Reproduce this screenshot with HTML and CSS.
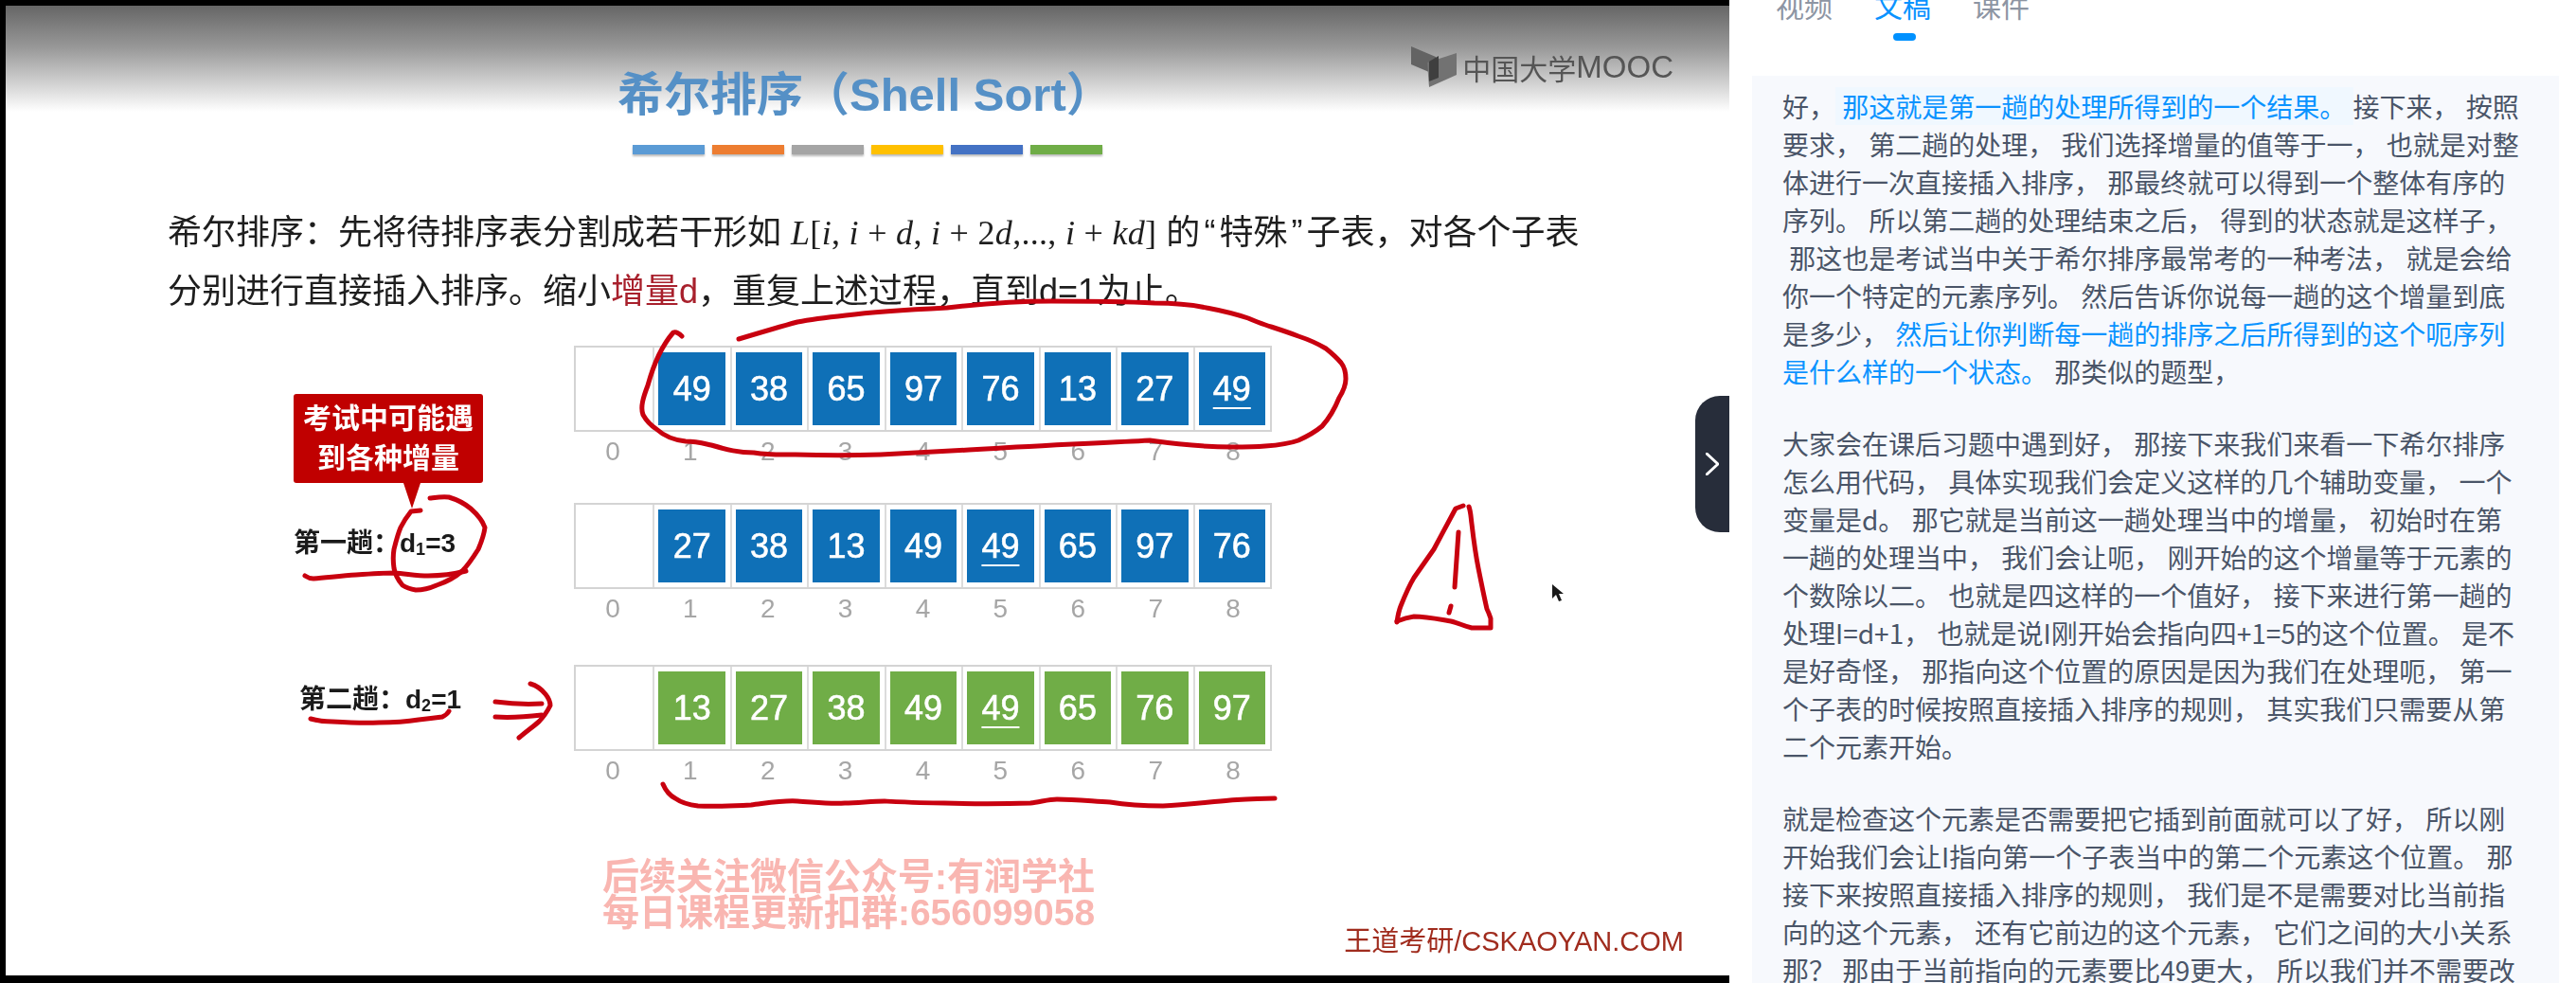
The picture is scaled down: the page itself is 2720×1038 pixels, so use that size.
FILE: index.html
```html
<!DOCTYPE html>
<html lang="zh-CN">

<head>
    <meta charset="UTF-8">
    <title>希尔排序 - 文稿</title>
    <link rel="stylesheet" href="styles.css">
</head>

<body>
    <div class="video">
        <div class="slide">
            <div class="slide-head">
                <h1 class="slide-title">希尔排序（Shell Sort）</h1>
                <div class="logo">
                    <svg class="logo-icon" width="48" height="44" viewBox="0 0 48 44">
                        <path d="M0 0 L26 11 L26 30 L0 19 Z" fill="#636363" />
                        <path d="M17 17 L48 7 L48 30 L19 43 Z" fill="#727272" />
                        <path d="M19 16 L29 10 L29 33 L19 37 Z" fill="#3f3f3f" />
                    </svg>
                    <span class="logo-cn">中国大学</span><span class="logo-en">MOOC</span>
                </div>
            </div>

            <div class="bars">
                <span class="bar bar-blue"></span>
                <span class="bar bar-orange"></span>
                <span class="bar bar-gray"></span>
                <span class="bar bar-yellow"></span>
                <span class="bar bar-navy"></span>
                <span class="bar bar-green"></span>
            </div>

            <p class="intro">
                希尔排序：先将待排序表分割成若干形如 <span class="formula"><i>L</i>[<i>i</i>, <i>i</i> + <i>d</i>, <i>i</i> + 2<i>d</i>,..., <i>i</i> + <i>kd</i>]</span> 的<span class="quote">“</span>特殊<span class="quote">”</span>子表，对各个子表<br>
                分别进行直接插入排序。缩小<span class="hot">增量d</span>，重复上述过程，直到d=1为止。
            </p>

            <div class="pass pass-first">
                <div class="pass-label"></div>
                <div class="array">
                    <div class="cells">
                        <div class="cell"></div>
                        <div class="cell"><b class="num">49</b></div>
                        <div class="cell"><b class="num">38</b></div>
                        <div class="cell"><b class="num">65</b></div>
                        <div class="cell"><b class="num">97</b></div>
                        <div class="cell"><b class="num">76</b></div>
                        <div class="cell"><b class="num">13</b></div>
                        <div class="cell"><b class="num">27</b></div>
                        <div class="cell"><b class="num"><u>49</u></b></div>
                    </div>
                    <div class="index">
                        <span>0</span><span>1</span><span>2</span><span>3</span><span>4</span><span>5</span><span>6</span><span>7</span><span>8</span>
                    </div>
                </div>
            </div>

            <div class="pass pass-second">
                <div class="pass-label">
                    <div class="callout">考试中可能遇<br>到各种增量</div>
                    <span class="pass-name">第一趟：d<sub>1</sub>=3</span>
                </div>
                <div class="array">
                    <div class="cells">
                        <div class="cell"></div>
                        <div class="cell"><b class="num">27</b></div>
                        <div class="cell"><b class="num">38</b></div>
                        <div class="cell"><b class="num">13</b></div>
                        <div class="cell"><b class="num">49</b></div>
                        <div class="cell"><b class="num"><u>49</u></b></div>
                        <div class="cell"><b class="num">65</b></div>
                        <div class="cell"><b class="num">97</b></div>
                        <div class="cell"><b class="num">76</b></div>
                    </div>
                    <div class="index">
                        <span>0</span><span>1</span><span>2</span><span>3</span><span>4</span><span>5</span><span>6</span><span>7</span><span>8</span>
                    </div>
                </div>
            </div>

            <div class="pass pass-third">
                <div class="pass-label">
                    <span class="pass-name">第二趟：d<sub>2</sub>=1</span>
                </div>
                <div class="array">
                    <div class="cells cells-done">
                        <div class="cell"></div>
                        <div class="cell"><b class="num">13</b></div>
                        <div class="cell"><b class="num">27</b></div>
                        <div class="cell"><b class="num">38</b></div>
                        <div class="cell"><b class="num">49</b></div>
                        <div class="cell"><b class="num"><u>49</u></b></div>
                        <div class="cell"><b class="num">65</b></div>
                        <div class="cell"><b class="num">76</b></div>
                        <div class="cell"><b class="num">97</b></div>
                    </div>
                    <div class="index">
                        <span>0</span><span>1</span><span>2</span><span>3</span><span>4</span><span>5</span><span>6</span><span>7</span><span>8</span>
                    </div>
                </div>
            </div>

            <div class="slide-foot">
                <div class="notice">后续关注微信公众号:有润学社<br>每日课程更新扣群:656099058</div>
                <div class="credit">王道考研/CSKAOYAN.COM</div>
            </div>
        </div>

        <!-- pen strokes drawn over the slide, in video coordinates -->
        <svg class="ink" width="1826" height="1038" viewBox="0 0 1826 1038">
            <g fill="none" stroke="#c8000f" stroke-width="5" stroke-linecap="round" stroke-linejoin="round">
                <path d="M720 355 C716 351 714 350 711 351 C698 366 690 385 684 407 C679 420 676 430 679 438 C684 447 690 451 693 453 C703 462 714 465 724 466 C735 466 742 468 751 470 C768 475 780 478 796 478 C815 481 830 480 840 480 C870 481 900 481 930 480 C970 478 1005 476 1041 474 C1100 470 1160 468 1214 465 C1250 470 1280 472 1300 472 C1315 472 1325 472 1336 471 C1350 470 1360 469 1371 465 C1382 460 1390 455 1396 450 C1405 440 1410 430 1414 420 C1419 412 1421 406 1421 400 C1421 392 1420 388 1416 383 C1410 376 1405 372 1400 368 C1390 362 1380 358 1371 355 C1358 350 1345 346 1336 343 C1330 341 1325 339 1318 336 C1300 330 1290 328 1274 325 C1255 321 1235 320 1219 320 C1180 318 1145 318 1110 318 C1070 318 1035 321 1000 325 C960 327 925 329 893 333 C875 335 858 337 842 340 C820 346 800 352 780 358" />
                <path d="M454 526 C462 525 468 524 474 525 C484 528 491 532 497 537 C505 544 510 551 512 557 C511 565 508 573 505 580 C500 588 494 597 488 603 C480 610 470 615 461 618 C452 622 445 623 439 623 C433 622 428 620 425 618 C420 612 417 606 416 600 C415 593 415 586 416 580 C418 572 420 564 423 557 C426 551 430 545 434 540 L444 539" />
                <path d="M322 608 C325 610 328 611 331 611 C345 610 360 608 376 607 C390 606 404 605 416 605 C430 606 440 608 452 608 C466 608 480 606 492 603" />
                <path d="M328 759 C335 761 343 762 351 762 C367 763 384 764 400 763 C415 763 430 762 442 760 C452 759 460 758 467 757 C471 755 473 753 474 751" />
                <path d="M523 741 C538 743 555 744 572 743" />
                <path d="M523 757 C538 758 555 757 572 755" />
                <path d="M560 722 C567 724 572 728 576 733 C580 738 581 741 581 745 C578 751 574 757 569 762 C562 768 555 773 548 779" />
                <path d="M700 828 C703 835 707 840 713 843 C720 848 728 850 737 851 C755 852 775 851 793 850 C810 848 826 845 842 846 C860 847 875 849 892 848 C906 848 920 846 934 846 C955 847 975 848 997 848 C1028 849 1058 849 1088 848 C1098 847 1107 844 1116 844 C1135 844 1153 846 1172 847 C1190 850 1210 851 1228 851 C1252 850 1275 847 1299 845 C1315 844 1330 843 1346 843" />
                <path d="M1475 657 C1476 650 1477 645 1479 640 C1483 630 1487 620 1493 610 C1500 600 1507 590 1514 580 C1522 565 1530 550 1537 537 L1545 534" />
                <path d="M1551 535 C1553 540 1553 546 1554 553 C1556 570 1558 585 1561 600 C1564 615 1567 630 1570 643 C1572 647 1573 650 1574 653 L1574 663 L1554 663 C1546 661 1540 658 1532 656 C1520 654 1506 651 1493 651 C1486 652 1480 654 1475 656" />
                <path d="M1540 562 L1536 620" />
                <path d="M1532 640 L1530 647" />
            </g>
            <path d="M1639 617 L1639 632 L1643 628 L1646 635 L1649 634 L1646 627 L1651 627 Z" fill="#1a1a1a" />
        </svg>

        <button class="fold" type="button">
            <svg width="14" height="24" viewBox="0 0 14 24">
                <path d="M1 1 L13 12 L1 23" fill="none" stroke="#ffffff" stroke-width="3" stroke-linecap="round" stroke-linejoin="round" />
            </svg>
        </button>
    </div>

    <div class="side">
        <div class="tabs">
            <span class="tab">视频</span>
            <span class="tab tab-on">文稿</span>
            <span class="tab">课件</span>
        </div>
        <div class="script">
            <p>好，<span class="said said-now"> 那这就是第一趟的处理所得到的一个结果。 </span>接下来， 按照<br>
            要求， 第二趟的处理， 我们选择增量的值等于一， 也就是对整<br>
            体进行一次直接插入排序， 那最终就可以得到一个整体有序的<br>
            序列。 所以第二趟的处理结束之后， 得到的状态就是这样子，<br>
            &nbsp;那这也是考试当中关于希尔排序最常考的一种考法， 就是会给<br>
            你一个特定的元素序列。 然后告诉你说每一趟的这个增量到底<br>
            是多少， <span class="said">然后让你判断每一趟的排序之后所得到的这个呃序列<br>
            是什么样的一个状态。</span> 那类似的题型，</p>
            <p>大家会在课后习题中遇到好， 那接下来我们来看一下希尔排序<br>
            怎么用代码， 具体实现我们会定义这样的几个辅助变量， 一个<br>
            变量是d。 那它就是当前这一趟处理当中的增量， 初始时在第<br>
            一趟的处理当中， 我们会让呃， 刚开始的这个增量等于元素的<br>
            个数除以二。 也就是四这样的一个值好， 接下来进行第一趟的<br>
            处理I=d+1， 也就是说I刚开始会指向四+1=5的这个位置。 是不<br>
            是好奇怪， 那指向这个位置的原因是因为我们在处理呃， 第一<br>
            个子表的时候按照直接插入排序的规则， 其实我们只需要从第<br>
            二个元素开始。</p>
            <p>就是检查这个元素是否需要把它插到前面就可以了好， 所以刚<br>
            开始我们会让I指向第一个子表当中的第二个元素这个位置。 那<br>
            接下来按照直接插入排序的规则， 我们是不是需要对比当前指<br>
            向的这个元素， 还有它前边的这个元素， 它们之间的大小关系<br>
            那？ 那由于当前指向的元素要比49更大， 所以我们并不需要改</p>
        </div>
    </div>
</body>

</html>
```

FILE: styles.css
```css
html,
body {
    margin: 0;
    height: 1038px;
    overflow: hidden;
}

body {
    display: flex;
    background: #fff;
    font-family: "Liberation Sans", "Noto Sans CJK SC", sans-serif;
}

/* left: the video */
.video {
    position: relative;
    flex: 0 0 1826px;
    box-sizing: border-box;
    padding: 6px 0 8px 6px;
    background: #000;
}

.slide {
    height: 1024px;
    overflow: hidden;
    background: #fff linear-gradient(#666666, #999999 40%, #ffffff) no-repeat;
    background-size: 100% 112px;
    filter: blur(0.5px);
}

.slide-head {
    display: flex;
    align-items: flex-start;
    height: 147px;
    padding: 0 59px 0 646px;
}

.slide-title {
    margin: 66px 0 0;
    font-size: 49px;
    line-height: 56px;
    font-weight: 700;
    color: #5590c6;
    white-space: nowrap;
}

.logo {
    display: flex;
    align-items: center;
    margin: 43px 0 0 auto;
    color: #555;
}

.logo-icon {
    margin-right: 6px;
}

.logo-cn {
    font-size: 30px;
}

.logo-en {
    font-size: 33px;
}

.bars {
    display: flex;
    gap: 8px;
    padding-left: 662px;
}

.bar {
    width: 76px;
    height: 10px;
    box-shadow: 0 2px 2px #bbb;
}

.bar-blue { background: #5b9bd5; }
.bar-orange { background: #ed7d31; }
.bar-gray { background: #a5a5a5; }
.bar-yellow { background: #ffc000; }
.bar-navy { background: #4472c4; }
.bar-green { background: #70ad47; }

.intro {
    margin: 52px 0 0;
    padding-left: 171px;
    font-size: 36px;
    line-height: 61px;
    color: #1e1e1e;
    white-space: nowrap;
}

.formula {
    font-family: "Liberation Serif", serif;
    font-size: 36px;
    letter-spacing: 0.3px;
}

.quote {
    padding: 0 4px;
}

.hot {
    color: #a8202c;
}

/* the three rows of the array */
.pass {
    display: flex;
}

.pass-first {
    margin-top: 27px;
}

.pass-second {
    margin-top: 33px;
}

.pass-third {
    margin-top: 38px;
}

.pass-label {
    position: relative;
    box-sizing: border-box;
    flex: 0 0 600px;
    height: 91px;
    display: flex;
    align-items: center;
    padding: 0 0 12px 304px;
}

.pass-third .pass-label {
    padding: 0 0 24px 310px;
}

.pass-name {
    font-size: 28px;
    font-weight: 700;
    color: #1a1a1a;
    white-space: nowrap;
}

.pass-name sub {
    font-size: 18px;
    line-height: 0;
    vertical-align: -3px;
}

.callout {
    position: absolute;
    left: 304px;
    bottom: 100%;
    width: 200px;
    height: 94px;
    margin-bottom: 21px;
    box-sizing: border-box;
    padding-top: 5px;
    border-radius: 3px;
    background: #c00000;
    color: #fff;
    font-size: 30px;
    font-weight: 700;
    line-height: 42px;
    text-align: center;
}

.callout::after {
    content: "";
    position: absolute;
    left: 116px;
    top: 100%;
    border-style: solid;
    border-width: 27px 9px 0;
    border-color: #c00000 transparent transparent;
}

.array {
    width: 737px;
}

.cells,
.index {
    display: grid;
    grid-template-columns: repeat(9, 1fr);
}

.cells {
    height: 91px;
    border: 2px solid #d4d4d4;
    box-sizing: border-box;
}

.cell {
    display: flex;
    padding: 5px 5px 5px 4px;
    border-left: 2px solid #dcdcdc;
}

.cell:first-child {
    padding: 0;
    border-left: 0;
}

.num {
    flex: 1;
    display: flex;
    align-items: center;
    justify-content: center;
    background: #0f70b7;
    color: #fff;
    font-size: 36px;
    font-weight: 400;
    -webkit-text-stroke: 0.6px #fff;
}

.num u {
    text-underline-offset: 7px;
    text-decoration-thickness: 2px;
}

.cells-done .num {
    background: #70ad47;
}

.index {
    height: 42px;
    align-items: center;
    text-align: center;
    font-size: 28px;
    color: #a6a6a6;
}

.slide-foot {
    position: relative;
    padding-left: 628px;
    margin-top: 72px;
}

.notice {
    width: 524px;
    font-size: 39px;
    font-weight: 700;
    line-height: 38px;
    text-align: center;
    color: #f9b6b1;
    white-space: nowrap;
}

.credit {
    position: absolute;
    right: 48px;
    top: 70px;
    font-size: 29px;
    line-height: 34px;
    color: #a02c1e;
    white-space: nowrap;
}

.ink {
    position: absolute;
    left: 0;
    top: 0;
    pointer-events: none;
}

.fold {
    position: absolute;
    right: 0;
    top: 418px;
    width: 36px;
    height: 144px;
    padding: 0;
    border: 0;
    border-radius: 26px 0 0 26px;
    background: #272d3a;
    display: flex;
    align-items: center;
    justify-content: center;
}

/* right: tabs and the lecture script */
.side {
    flex: 1;
    padding: 0 18px 0 24px;
    overflow: hidden;
}

.tabs {
    position: relative;
    display: flex;
    gap: 44px;
    height: 80px;
    margin-top: -14px;
    padding-left: 25px;
    margin-bottom: 14px;
}

.tab {
    font-size: 30px;
    line-height: 44px;
    color: #8d95a3;
}

.tab-on {
    position: relative;
    color: #0a93ff;
}

.tab-on::after {
    content: "";
    position: absolute;
    left: 20px;
    top: 49px;
    width: 24px;
    height: 8px;
    border-radius: 4px;
    background: #0091ff;
}

.script {
    height: 958px;
    box-sizing: border-box;
    padding: 12px 0 0 32px;
    background: #f7f9fd;
    font-family: "Noto Sans CJK SC", "Liberation Sans", sans-serif;
    font-size: 28px;
    line-height: 40px;
    word-spacing: 1px;
    color: #4a5568;
    white-space: nowrap;
}

.script p {
    margin: 0 0 36px;
}

.said {
    color: #0a93ff;
}

.said-now {
    background: #f0f8ff;
}
```
